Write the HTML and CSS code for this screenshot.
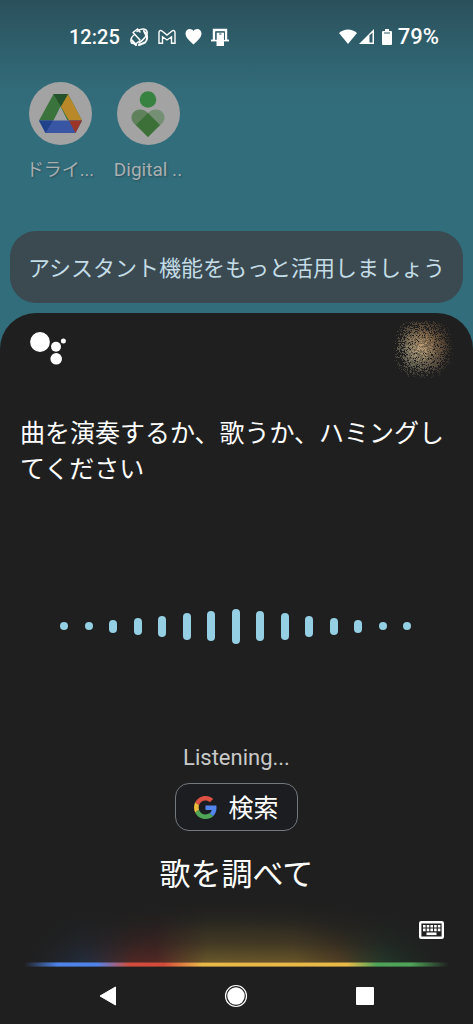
FILE: index.html
```html
<!DOCTYPE html>
<html lang="ja">
<head>
<meta charset="utf-8">
<meta name="viewport" content="width=device-width, initial-scale=1">
<title>アシスタント</title>
<link rel="stylesheet" href="styles.css">
</head>
<body>
<div class="screen">
  <header class="status">
    <div class="status-group">
      <span class="clock">12:25</span>
      <svg class="status-icon" viewBox="0 0 20 20" width="20" height="20" aria-hidden="true"><g fill="none" stroke="#fff" stroke-width="1.500" stroke-linecap="round" stroke-linejoin="round"><path d="M8.500 2L4 5.500 11 13M8.500 2l2.500 3"/><path d="M8 4.500c4-3.500 9-3 10 0s-3 8-8 11.500"/><path d="M5 8c-3 2-4 6-2.500 8l4 1 4-3"/><path d="M17 6c2 4 1 8-1 9.500l-6 2.500M15 4l2 4" stroke-width="2"/><path d="M3 13.500l4 4.500" stroke-width="2.200"/></g></svg>
      <svg class="status-icon" viewBox="0 0 18 16" width="18" height="16" aria-hidden="true"><path d="M1 14.200V3.500C1 1.500 2.600 1 4 2l5 4 5-4c1.400-1 3-.5 3 1.500v10.700h-3.500V7.800L9 11 4.500 7.800v6.400z" fill="none" stroke="#fff" stroke-width="1.400"/></svg>
      <svg class="status-icon" viewBox="0 0 16 16" width="17" height="17" aria-hidden="true"><path d="M8 15.500C3 11 .5 8.500.5 5.200.5 2.800 2.300 1 4.500 1 6 1 7.300 1.700 8 2.800 8.700 1.700 10 1 11.500 1c2.200 0 4 1.800 4 4.200C15.500 8.500 13 11 8 15.500z" fill="#fff"/></svg>
      <svg class="status-icon" viewBox="0 0 18 18" width="18" height="18" aria-hidden="true"><path d="M3 12V2h12v10" fill="none" stroke="#fff" stroke-width="2.400"/><path d="M0 12.500h18" stroke="#fff" stroke-width="1.800"/><path d="M5.500 4.500h7.500V18H5.500z" fill="#fff"/><path d="M5 12V4h8.500v8" fill="none" stroke="#2f5966" stroke-width=".8"/><path d="M8 6h2.500" stroke="#2f5966"/></svg>
    </div>
    <div class="status-group status-right">
      <svg viewBox="0 0 18 15" width="18" height="15" aria-hidden="true"><path d="M0 4C5-.8 13-.8 18 4L9 15z" fill="#fff"/></svg>
      <svg viewBox="0 0 15 15" width="15" height="15" aria-hidden="true"><path d="M0 15L15 0v15z" fill="#fff"/><path d="M10.500 6.500L13.500 3.500v10h-3z" fill="#2e5b67"/></svg>
      <svg class="battery" viewBox="0 0 10 16" width="10" height="16" aria-hidden="true"><path d="M3 0h4v2h2q1 0 1 1v12q0 1-1 1H1q-1 0-1-1V3q0-1 1-1h2z" fill="#fff"/><path d="M2 4h6" stroke="#2f5966"/></svg>
      <span class="percent">79%</span>
    </div>
  </header>

  <nav class="apps" aria-label="アプリ">
    <a class="app" href="#drive">
      <span class="app-icon">
        <svg viewBox="0 0 43 39" width="43" height="39" aria-hidden="true"><path d="M14.500 0H29L43 26.500H28.500L21.500 12.500 14.500 26.500H0z" fill="#3b733d"/><path d="M29 0L43 26.500H30L21.800 12.500z" fill="#b88829"/><path d="M14.500 0H29l-7.200 12.500z" fill="#24522a"/><path d="M0 26.500h43L36.500 39h-30z" fill="#3856a4"/><path d="M0 26.500h14L6.500 39z" fill="#20428b"/><path d="M30 26.500h13L36.500 39z" fill="#9a3528"/></svg>
      </span>
      <span class="app-label">ドライ...</span>
    </a>
    <a class="app" href="#wellbeing">
      <span class="app-icon">
        <svg viewBox="0 0 34 46" width="34" height="46" aria-hidden="true"><circle cx="17" cy="8.500" r="8.300" fill="#388241"/><path d="M17 46L3 32.500C-5 23 8 13 17 22l9 11z" fill="#5f825d"/><path d="M17 22C26 13 39 23 31 32.500L17 46 8 37z" fill="#748f73"/><path d="M17 22L29 34 17 46 5 34z" fill="#3d7039"/></svg>
      </span>
      <span class="app-label latin">Digital ..</span>
    </a>
  </nav>

  <button class="tip" type="button">アシスタント機能をもっと活用しましょう</button>

  <main class="sheet">
    <div class="sheet-top">
      <svg class="assistant" viewBox="0 0 36 33" width="36" height="33" role="img" aria-label="アシスタント"><g fill="#fff"><circle cx="10" cy="10" r="9.900"/><circle cx="26" cy="14.800" r="5"/><circle cx="33.400" cy="9" r="2.500"/><circle cx="26.200" cy="26.800" r="5.800"/></g></svg>
      <canvas class="avatar" id="avatar" width="60" height="60" aria-label="アカウント"></canvas>
    </div>
    <p class="prompt">曲を演奏するか、歌うか、ハミングしてください</p>
    <div class="wave" aria-hidden="true">
      <i class="bar b1"></i><i class="bar b1"></i><i class="bar b2"></i><i class="bar b3"></i><i class="bar b4"></i><i class="bar b5"></i><i class="bar b6"></i><i class="bar b7"></i><i class="bar b6"></i><i class="bar b5"></i><i class="bar b4"></i><i class="bar b3"></i><i class="bar b2"></i><i class="bar b1"></i><i class="bar b1"></i>
    </div>
    <p class="listening">Listening...</p>
    <button class="search" type="button">
      <svg viewBox="0 0 48 48" width="23" height="23" aria-hidden="true"><path fill="#dd5144" d="M24 9.500c3.500 0 6.700 1.200 9.200 3.600l6.900-6.900C35.900 2.400 30.500 0 24 0 14.600 0 6.500 5.400 2.600 13.200l8 6.200C12.400 13.700 17.700 9.500 24 9.500z"/><path fill="#5286ed" d="M47 24.500c0-1.600-.2-3.100-.4-4.500H24v9h12.900c-.6 3-2.300 5.500-4.700 7.200l7.700 6C44.400 38 47 31.800 47 24.500z"/><path fill="#edba3b" d="M10.500 28.600c-.5-1.500-.8-3-.8-4.600s.3-3.100.8-4.600l-8-6.200C.9 16.500 0 20.100 0 24s.9 7.500 2.600 10.800z"/><path fill="#4fa458" d="M24 48c6.500 0 11.900-2.100 15.900-5.800l-7.700-6c-2.200 1.500-4.900 2.300-8.200 2.300-6.300 0-11.600-4.200-13.500-9.900l-8 6.200C6.500 42.600 14.600 48 24 48z"/></svg>
      <span class="search-label">検索</span>
    </button>
    <p class="suggestion">歌を調べて</p>
    <div class="glow">
      <button class="keyboard" type="button" aria-label="キーボード">
        <svg viewBox="0 0 25 18" width="25" height="18" aria-hidden="true"><rect x="1.200" y="1.200" width="22.600" height="15.600" rx="1" fill="none" stroke="#fff" stroke-width="2.400"/><path d="M4 5.300h17.500M4 8.900h17.500" stroke="#fff" stroke-width="2.600" stroke-dasharray="2.600 1.100"/><path d="M7.500 12.800h10" stroke="#fff" stroke-width="2.600"/></svg>
      </button>
    </div>
    <div class="line"></div>
    <nav class="system" aria-label="ナビゲーション">
      <button type="button" aria-label="戻る"><svg viewBox="0 0 24 24" width="24" height="24"><path d="M4 12L19.500 3v18z" fill="#fff" stroke="#fff" stroke-linejoin="round"/></svg></button>
      <button type="button" aria-label="ホーム"><svg viewBox="0 0 24 24" width="24" height="24"><circle cx="12" cy="12" r="8.700" fill="#fff"/><circle cx="12" cy="12" r="10.500" fill="none" stroke="#fff" stroke-width="1.200"/></svg></button>
      <button type="button" aria-label="履歴"><svg viewBox="0 0 24 24" width="24" height="24"><rect x="3" y="3" width="18" height="18" rx="1" fill="#fff"/></svg></button>
    </nav>
  </main>
</div>
<script src="avatar.js"></script>
</body>
</html>
```

FILE: styles.css
```css
* {
  box-sizing: border-box;
}

body {
  margin: 0;
  font-family: Roboto, "Noto Sans CJK JP", sans-serif;
  color: #fff;
  background: #326d7b;
}

p {
  margin: 0;
}

button {
  margin: 0;
  padding: 0;
  border: 0;
  background: none;
  color: inherit;
  font: inherit;
}

svg {
  display: block;
  flex: none;
}

.screen {
  display: flex;
  flex-direction: column;
  min-height: 100vh;
  background: linear-gradient(#2b505b 0, #2f606d 50px, #326a78 85px, #326d7b 110px);
}

.status {
  display: flex;
  justify-content: space-between;
  align-items: center;
  height: 73px;
  padding: 0 34px 0 69px;
}

.status-group {
  display: flex;
  align-items: center;
  gap: 9px;
}

.status-right {
  gap: 2px;
}

.battery {
  margin: 0 4px 0 6px;
}

.clock,
.percent {
  font-weight: 500;
  line-height: 24px;
}

.clock {
  font-size: 20px;
}

.percent {
  font-size: 22px;
}

.apps {
  display: flex;
  gap: 16px;
  padding: 9px 24px 0;
}

.app {
  display: flex;
  flex-direction: column;
  align-items: center;
  gap: 12px;
  width: 72px;
  color: #a9b0b2;
  text-decoration: none;
}

.app-icon {
  display: flex;
  align-items: center;
  justify-content: center;
  width: 63px;
  height: 63px;
  border-radius: 50%;
  background: #a3a3a3;
}

.app-label {
  font-size: 18px;
  line-height: 26px;
  white-space: nowrap;
  text-shadow: 1px 1px 2px #2a4d57;
}

.latin {
  font-size: 19px;
}

.tip {
  margin: 48px 10px 10px;
  padding: 20px 16px 16px;
  border-radius: 26px;
  background: #3a4a50;
  color: #c3dce6;
  font-size: 22px;
  line-height: 36px;
  white-space: nowrap;
}

.sheet {
  display: flex;
  flex-direction: column;
  flex: 1;
  border-radius: 36px 36px 0 0;
  background: #1f1f1f;
}

.sheet-top {
  display: flex;
  justify-content: space-between;
  align-items: flex-start;
  padding: 5px 20px 0 30px;
}

.assistant {
  margin-top: 14px;
}

.prompt {
  padding: 38px 20px 0;
  font-size: 25px;
  line-height: 36px;
}

.wave {
  display: flex;
  flex: 1;
  align-items: center;
  justify-content: space-between;
  min-height: 80px;
  margin-top: 20px;
  padding: 0 62px 0 60px;
}

.bar {
  width: 8px;
  border-radius: 4px;
  background: #94cfe4;
}

.b1 { height: 8px; }
.b2 { height: 13px; }
.b3 { height: 17px; }
.b4 { height: 21px; }
.b5 { height: 27px; }
.b6 { height: 30px; }
.b7 { height: 35px; }

.listening {
  color: #c9c9c9;
  font-size: 22px;
  line-height: 28px;
  text-align: center;
}

.search {
  display: flex;
  align-items: center;
  align-self: center;
  gap: 11px;
  height: 48px;
  margin-top: 11px;
  padding: 0 18px;
  border: 1px solid #74797e;
  border-radius: 14px;
  background: #1b1d20;
  font-size: 25px;
  line-height: 36px;
}

.search-label {
  padding-top: 4px;
}

.suggestion {
  margin-top: 20px;
  font-size: 31px;
  line-height: 48px;
  text-align: center;
}

.glow {
  display: flex;
  justify-content: flex-end;
  align-items: flex-end;
  height: 63px;
  padding: 0 29px 23px;
  background:
    radial-gradient(ellipse 50% 120% at 50% 100%, transparent 45%, #1f1f1f 100%),
    linear-gradient(#1f1f1f 5%, #1f1f1fe6 40%, #1f1f1fc4 70%, #1f1f1f80),
    linear-gradient(90deg, #1f1f1f 6%, #2b4878 17%, #7c3028 28%, #84302a 33%, #b39034 44%, #b08a32 62%, #805c28 72%, #275f3c 82%, #1f1f1f 94%);
}

.line {
  height: 5px;
  margin: 0 24px;
  border: solid #1f1f1f66;
  border-width: 1px 0;
  background: linear-gradient(90deg, transparent, #4f83ea 8%, #4f83ea 17%, #d34c3b 25%, #d34c3b 33%, #e9b948 42%, #e9b948 76%, #4fa359 83%, #4fa359 91%, transparent);
}

.system {
  display: grid;
  grid-template-columns: repeat(3, 1fr);
  justify-items: center;
  align-items: center;
  height: 57px;
  padding: 0 44px;
}
```

FILE: avatar.js
```js
const canvas = document.getElementById("avatar");
const ctx = canvas.getContext("2d");
let seed = 7;

function random() {
  seed = (seed * 16807) % 2147483647;
  return seed / 2147483647;
}

for (let y = 3; y < 60; y++) {
  for (let x = 0; x < 60; x++) {
    const dx = Math.abs(x - 30) / 31;
    const dy = Math.abs(y - 30) / 31;
    const edge = Math.pow(dx ** 2.4 + dy ** 2.4, 1 / 2.4);
    const core = Math.hypot(x - 27, y - 29) / 36;
    const keep = random();
    const grain = random();
    if (edge > 1 || keep < Math.pow(edge, 2.5)) continue;
    const shade = Math.pow(Math.max(0, 1 - core), 1.1) * (0.45 + grain * 0.6);
    const warm = Math.min(1, Math.max(0, (x - y + 25) / 55));
    const r = 200;
    const g = 188 - 42 * warm;
    const b = 152 - 60 * warm;
    ctx.fillStyle = `rgba(${r}, ${g}, ${b}, ${Math.min(0.95, shade + 0.04)})`;
    ctx.fillRect(x, y, 1, 1);
  }
}
```
